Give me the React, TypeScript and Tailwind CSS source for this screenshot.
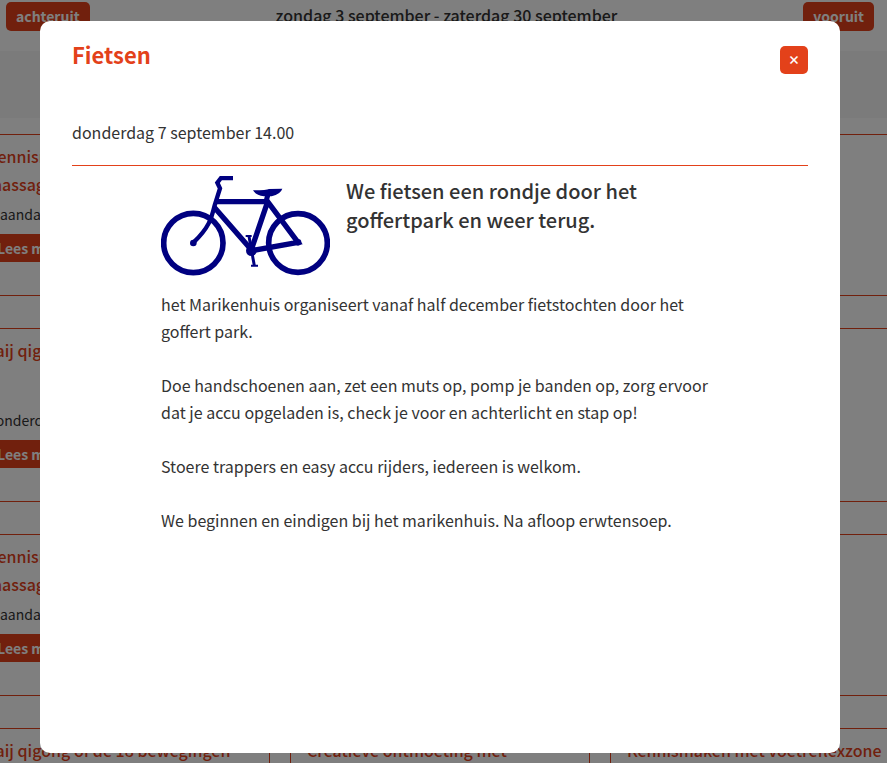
import { ReactNode } from "react";

type Activity = { title?: string; date?: string };

const kennismaken: Activity = {
  title: "Kennismaken met voetreflexzone massage",
  date: "maandag 4 september 10.00",
};
const qigong: Activity = {
  title: "Taij qigong of de 18 bewegingen",
  date: "donderdag 7 september 10.00",
};

const activities: Activity[] = [
  kennismaken, {}, {},
  qigong, {}, {},
  kennismaken, {}, {},
  qigong, { title: "Creatieve ontmoeting met" }, kennismaken,
];

function NavButton({ children }: { children: ReactNode }) {
  return (
    <button type="button" className="h-[29px] rounded-[5px] bg-[#e3411a] px-[10px] text-[14px] leading-[29px] font-semibold text-white">
      {children}
    </button>
  );
}

function Card({ title, date }: Activity) {
  return (
    <article className="flex flex-col border border-[#e3411a] px-4 pt-[7px] pb-[33px]">
      {title && <h3 className="text-[16px] leading-7 font-medium text-[#e3411a]">{title}</h3>}
      {date && (
        <div className="mt-auto">
          <p className="mb-2 text-[14px] leading-6">{date}</p>
          <button type="button" className="block h-7 rounded-[5px] bg-[#e3411a] px-[10px] text-[14px] leading-7 font-semibold text-white">
            Lees meer
          </button>
        </div>
      )}
    </article>
  );
}

function Bicycle() {
  return (
    <svg viewBox="33 33 507 300" className="h-[100px] w-[169px] shrink-0" role="img" aria-label="Fiets" fill="none" stroke="#000080">
      <circle cx="130" cy="234" r="89" strokeWidth="17" />
      <circle cx="444" cy="234" r="88" strokeWidth="17" />
      <path d="M249 39H213L202 53L210 70L194 121C185 158 179 186 130 233" strokeWidth="13" />
      <path d="M199 110H354" strokeWidth="16" />
      <path d="M192 126L304 254L353 110L444 232L304 257" strokeWidth="16" />
      <path d="M348 110L355 84" strokeWidth="15" />
      <path d="M309 76Q350 76 357 72L397 71Q392 87 365 94H342Q318 90 309 76Z" fill="#000080" stroke="none" />
      <path d="M297 214L313 302" strokeWidth="9" />
      <path d="M287 213H305M303 302H324" strokeWidth="6" />
      <g fill="#000080" stroke="none">
        <circle cx="130" cy="234" r="10" />
        <circle cx="444" cy="232" r="10" />
        <circle cx="304" cy="257" r="16" />
      </g>
    </svg>
  );
}

export default function App() {
  return (
    <div className="h-screen overflow-hidden bg-white font-['Noto_Sans_CJK_JP','Noto_Sans_CJK_SC',sans-serif] text-[#333]">
      <div className="pr-[7px]">
        <header className="flex h-[51px] items-start justify-between px-[6px] pt-[2px]">
          <NavButton>achteruit</NavButton>
          <h2 className="text-[16px] leading-[26px] font-medium">zondag 3 september - zaterdag 30 september</h2>
          <NavButton>vooruit</NavButton>
        </header>
      </div>
      <div className="mb-4 h-[67px] bg-[#f7f7f7]" />
      <div className="flex justify-center pr-[7px]">
        <main className="grid w-[940px] shrink-0 grid-cols-3 grid-rows-[162px_174px_162px_162px] gap-x-5 gap-y-8">
          {activities.map((activity, i) => (
            <Card key={i} {...activity} />
          ))}
        </main>
      </div>

      <div className="fixed inset-0 flex justify-center bg-black/50 pt-[21px] pr-[7px] pb-[10px]">
        <section role="dialog" aria-modal="true" aria-labelledby="dialog-title" className="w-full max-w-[800px] rounded-[10px] bg-white px-8 pt-5">
          <div className="flex items-start justify-between">
            <h1 id="dialog-title" className="text-[22px] leading-[26px] font-bold text-[#e3411a]">Fietsen</h1>
            <button type="button" aria-label="Sluiten" className="mt-[5px] size-7 rounded-[5px] bg-[#e3411a] text-[12px] leading-7 font-black text-white">
              ×
            </button>
          </div>
          <p className="mt-[45px] border-b border-[#e3411a] pb-[19px] text-[16px] leading-[27px]">donderdag 7 september 14.00</p>
          <div className="mx-auto max-w-[558px] pt-[10px]">
            <div className="flex gap-4">
              <Bicycle />
              <h2 className="text-[20px] leading-[29px] font-medium">We fietsen een rondje door het goffertpark en weer terug.</h2>
            </div>
            <div className="mt-[15px] space-y-[27px] text-[16px] leading-[27px]">
              <p>het Marikenhuis organiseert vanaf half december fietstochten door het goffert park.</p>
              <p>Doe handschoenen aan, zet een muts op, pomp je banden op, zorg ervoor dat je accu opgeladen is, check je voor en achterlicht en stap op!</p>
              <p>Stoere trappers en easy accu rijders, iedereen is welkom.</p>
              <p>We beginnen en eindigen bij het marikenhuis. Na afloop erwtensoep.</p>
            </div>
          </div>
        </section>
      </div>
    </div>
  );
}
